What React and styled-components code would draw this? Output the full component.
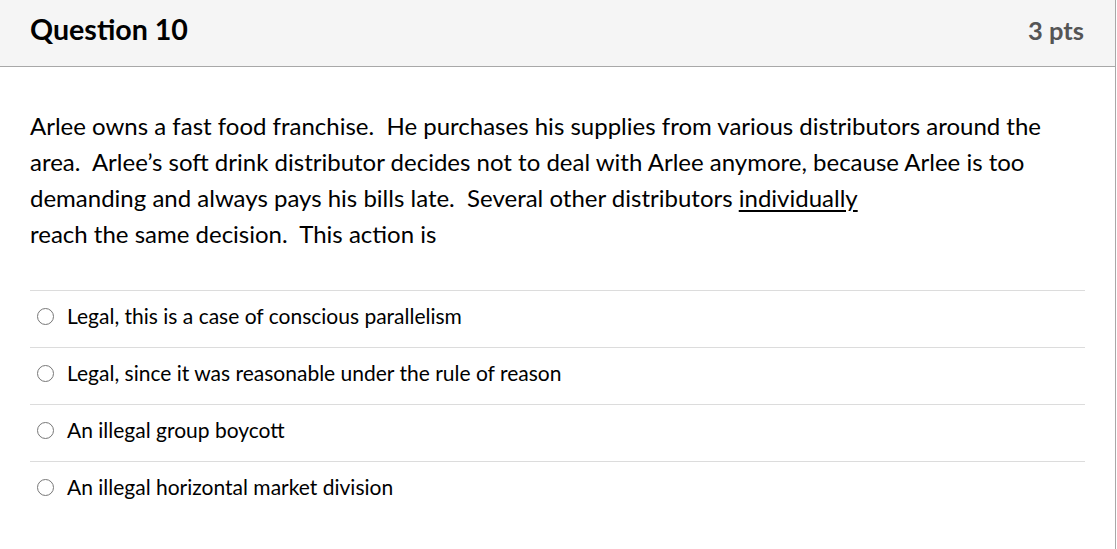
import React from 'react';
import styled, { createGlobalStyle } from 'styled-components';

const GlobalStyle = createGlobalStyle`
    html, body {
        margin: 0;
        padding: 0;
        background: #fff;
    }
    body {
        font-family: Lato, "Liberation Sans", sans-serif;
        color: #000;
    }
`;

const QuestionCard = styled.div`
    width: 1115px;
    min-height: 549px;
    border-right: 1px solid #a8a8a8;
    background: #fff;
`;

const Header = styled.div`
    display: flex;
    align-items: center;
    justify-content: space-between;
    height: 67px;
    padding: 0 31px 8px 30px;
    background: #f5f5f5;
    border-bottom: 1px solid #a8a8a8;
    box-sizing: border-box;
`;

const Title = styled.h2`
    margin: 0;
    font-size: 28.6px;
    font-weight: 700;
    color: #000;
`;

const Points = styled.span`
    font-size: 25.5px;
    font-weight: 700;
    color: #555;
    padding-top: 2px;
`;

const Body = styled.div`
    padding: 41px 30px 0 30px;
`;

const Prompt = styled.p`
    margin: 0 0 38px 0;
    font-size: 24px;
    line-height: 36px;
    color: #000;
`;

const Underlined = styled.span`
    text-decoration: underline;
    text-decoration-thickness: 2px;
    text-underline-offset: 3px;
`;

const AnswerList = styled.div`
    display: flex;
    flex-direction: column;
`;

const Answer = styled.label`
    display: flex;
    align-items: center;
    gap: 13px;
    height: 57px;
    padding: 0 0 8px 7px;
    box-sizing: border-box;
    border-top: 1px solid #dcdcdc;
    font-size: 21px;
    color: #000;
    cursor: pointer;
`;

const Radio = styled.span`
    width: 17px;
    height: 17px;
    border: 1.6px solid #777;
    border-radius: 50%;
    box-sizing: border-box;
    flex-shrink: 0;
    margin-top: 3px;
`;

const answers = [
    'Legal, this is a case of conscious parallelism',
    'Legal, since it was reasonable under the rule of reason',
    'An illegal group boycott',
    'An illegal horizontal market division',
];

export default function App() {
    return (
        <>
            <GlobalStyle />
            <QuestionCard>
                <Header>
                    <Title>Question 10</Title>
                    <Points>3 pts</Points>
                </Header>
                <Body>
                    <Prompt>
                        Arlee owns a fast food franchise.&nbsp; He purchases his supplies from various distributors around the
                        <br />
                        area.&nbsp; Arlee’s soft drink distributor decides not to deal with Arlee anymore, because Arlee is too
                        <br />
                        demanding and always pays his bills late.&nbsp; Several other distributors <Underlined>individually</Underlined>
                        <br />
                        reach the same decision.&nbsp; This action is
                    </Prompt>
                    <AnswerList>
                        {answers.map((a) => (
                            <Answer key={a}>
                                <Radio />
                                {a}
                            </Answer>
                        ))}
                    </AnswerList>
                </Body>
            </QuestionCard>
        </>
    );
}
